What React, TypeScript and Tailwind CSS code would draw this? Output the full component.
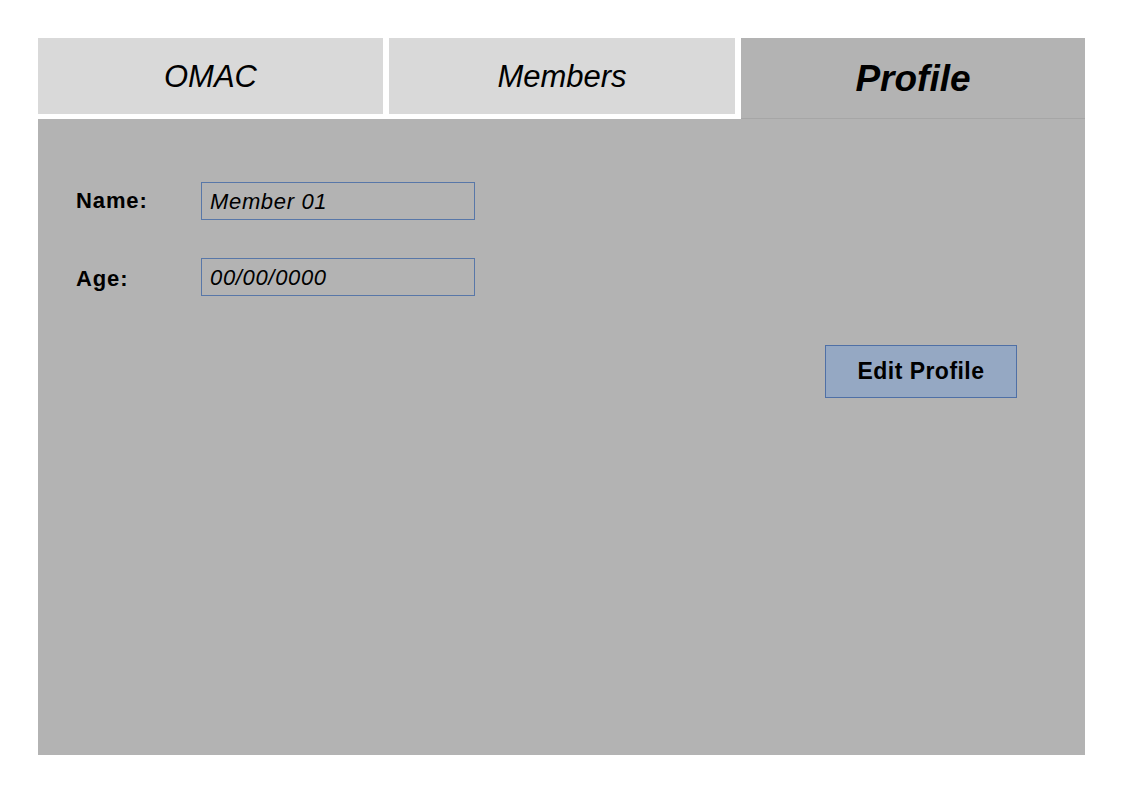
import { useState } from 'react'

const tabs = [
  { label: 'OMAC', w: 'w-[345px]' },
  { label: 'Members', w: 'w-[346px]' },
  { label: 'Profile', w: 'w-[344px]' },
]

export default function App() {
  const [active, setActive] = useState('Profile')

  return (
    <div className="min-h-[794px] w-full bg-white px-[38px] pt-[38px] font-['Liberation_Sans',Arial,sans-serif] text-black">
      <div className="flex w-[1047px] items-start gap-[6px]">
        {tabs.map((t) =>
          t.label === active ? (
            <button
              key={t.label}
              onClick={() => setActive(t.label)}
              className={`flex h-[81px] ${t.w} items-center justify-center border-b border-[#a6a6a6] bg-[#b3b3b3] pt-[2px] text-[37px] font-bold italic`}
            >
              {t.label}
            </button>
          ) : (
            <button
              key={t.label}
              onClick={() => setActive(t.label)}
              className={`flex h-[76px] ${t.w} items-center justify-center bg-[#d9d9d9] pt-[2px] text-[31px] italic`}
            >
              {t.label}
            </button>
          ),
        )}
      </div>

      <div className="flex h-[636px] w-[1047px] flex-col bg-[#b3b3b3] pt-[63px] pl-[38px] pr-[68px]">
        <div className="flex flex-col gap-[38px]">
          <div className="flex items-center">
            <span className="w-[125px] pb-[2px] text-[22px] font-bold tracking-[0.04em]">Name:</span>
            <div className="flex h-[38px] w-[274px] items-center border border-[#5877a8] px-[8px] text-[22px] italic tracking-[0.03em]">
              Member 01
            </div>
          </div>
          <div className="flex items-center">
            <span className="w-[125px] pt-[3px] text-[22px] font-bold tracking-[0.04em]">Age:</span>
            <div className="flex h-[38px] w-[274px] items-center border border-[#5877a8] px-[8px] text-[22px] italic tracking-[0.03em]">
              00/00/0000
            </div>
          </div>
        </div>
        <div className="mt-[49px] flex justify-end">
          <button className="flex h-[53px] w-[192px] items-center justify-center border border-[#4f70a6] bg-[#95a8c3] text-[23px] font-bold tracking-[0.02em]">
            Edit Profile
          </button>
        </div>
      </div>
    </div>
  )
}
